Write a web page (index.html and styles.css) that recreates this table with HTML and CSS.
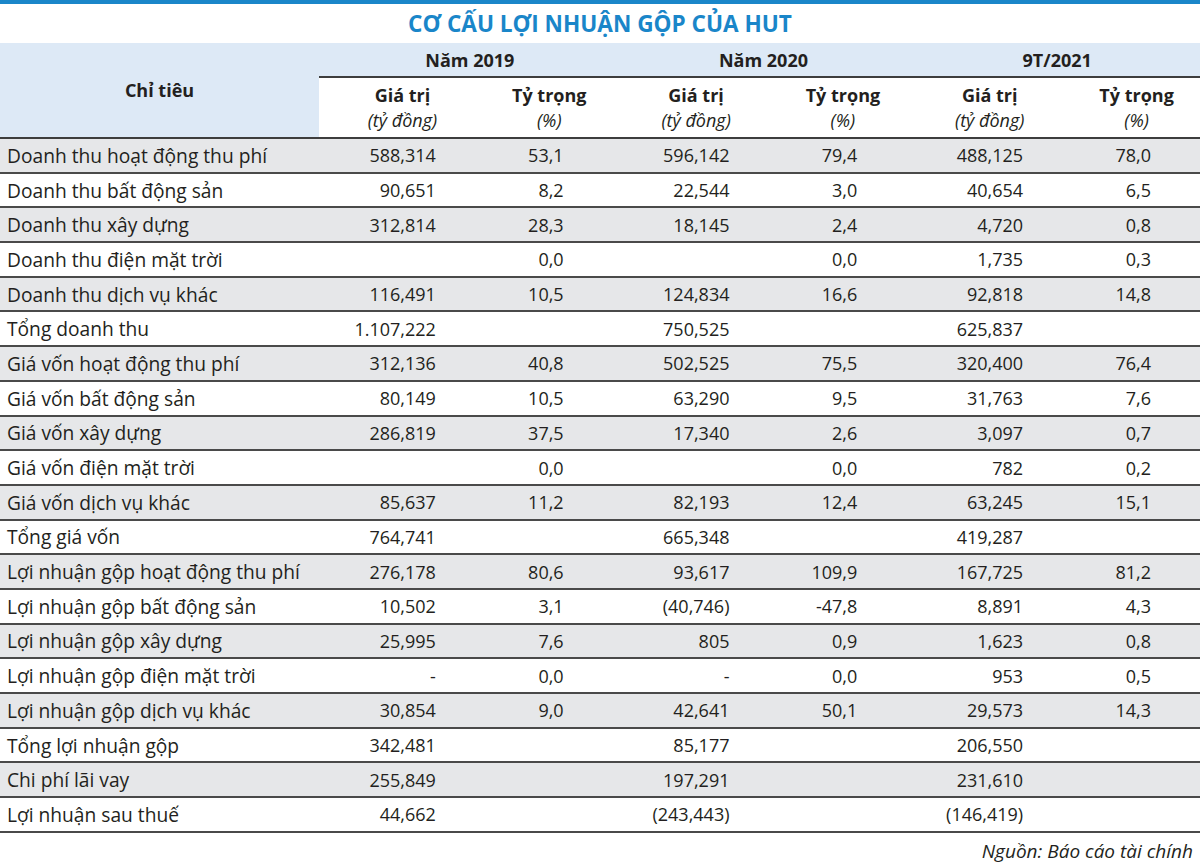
FILE: index.html
```html
<!DOCTYPE html>
<html lang="vi">
<head>
<meta charset="utf-8">
<title>Cơ cấu lợi nhuận gộp của HUT</title>
<link rel="stylesheet" href="styles.css">
</head>
<body>
<div class="topbar"></div>
<h1 class="title">CƠ CẤU LỢI NHUẬN GỘP CỦA HUT</h1>
<table class="tbl">
  <colgroup>
    <col class="c-label">
    <col class="c-num"><col class="c-num"><col class="c-num"><col class="c-num"><col class="c-num"><col class="c-num">
  </colgroup>
  <thead>
    <tr class="h-group">
      <th class="h-label" rowspan="2">Chỉ tiêu</th>
      <th colspan="2">Năm 2019</th>
      <th colspan="2">Năm 2020</th>
      <th colspan="2">9T/2021</th>
    </tr>
    <tr class="h-sub">
      <th><span class="b">Giá trị</span><span class="i">(tỷ đồng)</span></th>
      <th><span class="b">Tỷ trọng</span><span class="i">(%)</span></th>
      <th><span class="b">Giá trị</span><span class="i">(tỷ đồng)</span></th>
      <th><span class="b">Tỷ trọng</span><span class="i">(%)</span></th>
      <th><span class="b">Giá trị</span><span class="i">(tỷ đồng)</span></th>
      <th><span class="b">Tỷ trọng</span><span class="i">(%)</span></th>
    </tr>
  </thead>
  <tbody>
    <tr><td>Doanh thu hoạt động thu phí</td><td class="v">588,314</td><td class="p">53,1</td><td class="v">596,142</td><td class="p">79,4</td><td class="v">488,125</td><td class="p">78,0</td></tr>
    <tr><td>Doanh thu bất động sản</td><td class="v">90,651</td><td class="p">8,2</td><td class="v">22,544</td><td class="p">3,0</td><td class="v">40,654</td><td class="p">6,5</td></tr>
    <tr><td>Doanh thu xây dựng</td><td class="v">312,814</td><td class="p">28,3</td><td class="v">18,145</td><td class="p">2,4</td><td class="v">4,720</td><td class="p">0,8</td></tr>
    <tr><td>Doanh thu điện mặt trời</td><td class="v"></td><td class="p">0,0</td><td class="v"></td><td class="p">0,0</td><td class="v">1,735</td><td class="p">0,3</td></tr>
    <tr><td>Doanh thu dịch vụ khác</td><td class="v">116,491</td><td class="p">10,5</td><td class="v">124,834</td><td class="p">16,6</td><td class="v">92,818</td><td class="p">14,8</td></tr>
    <tr><td>Tổng doanh thu</td><td class="v">1.107,222</td><td class="p"></td><td class="v">750,525</td><td class="p"></td><td class="v">625,837</td><td class="p"></td></tr>
    <tr><td>Giá vốn hoạt động thu phí</td><td class="v">312,136</td><td class="p">40,8</td><td class="v">502,525</td><td class="p">75,5</td><td class="v">320,400</td><td class="p">76,4</td></tr>
    <tr><td>Giá vốn bất động sản</td><td class="v">80,149</td><td class="p">10,5</td><td class="v">63,290</td><td class="p">9,5</td><td class="v">31,763</td><td class="p">7,6</td></tr>
    <tr><td>Giá vốn xây dựng</td><td class="v">286,819</td><td class="p">37,5</td><td class="v">17,340</td><td class="p">2,6</td><td class="v">3,097</td><td class="p">0,7</td></tr>
    <tr><td>Giá vốn điện mặt trời</td><td class="v"></td><td class="p">0,0</td><td class="v"></td><td class="p">0,0</td><td class="v">782</td><td class="p">0,2</td></tr>
    <tr><td>Giá vốn dịch vụ khác</td><td class="v">85,637</td><td class="p">11,2</td><td class="v">82,193</td><td class="p">12,4</td><td class="v">63,245</td><td class="p">15,1</td></tr>
    <tr><td>Tổng giá vốn</td><td class="v">764,741</td><td class="p"></td><td class="v">665,348</td><td class="p"></td><td class="v">419,287</td><td class="p"></td></tr>
    <tr><td>Lợi nhuận gộp hoạt động thu phí</td><td class="v">276,178</td><td class="p">80,6</td><td class="v">93,617</td><td class="p">109,9</td><td class="v">167,725</td><td class="p">81,2</td></tr>
    <tr><td>Lợi nhuận gộp bất động sản</td><td class="v">10,502</td><td class="p">3,1</td><td class="v">(40,746)</td><td class="p">-47,8</td><td class="v">8,891</td><td class="p">4,3</td></tr>
    <tr><td>Lợi nhuận gộp xây dựng</td><td class="v">25,995</td><td class="p">7,6</td><td class="v">805</td><td class="p">0,9</td><td class="v">1,623</td><td class="p">0,8</td></tr>
    <tr><td>Lợi nhuận gộp điện mặt trời</td><td class="v">-</td><td class="p">0,0</td><td class="v">-</td><td class="p">0,0</td><td class="v">953</td><td class="p">0,5</td></tr>
    <tr><td>Lợi nhuận gộp dịch vụ khác</td><td class="v">30,854</td><td class="p">9,0</td><td class="v">42,641</td><td class="p">50,1</td><td class="v">29,573</td><td class="p">14,3</td></tr>
    <tr><td>Tổng lợi nhuận gộp</td><td class="v">342,481</td><td class="p"></td><td class="v">85,177</td><td class="p"></td><td class="v">206,550</td><td class="p"></td></tr>
    <tr><td>Chi phí lãi vay</td><td class="v">255,849</td><td class="p"></td><td class="v">197,291</td><td class="p"></td><td class="v">231,610</td><td class="p"></td></tr>
    <tr><td>Lợi nhuận sau thuế</td><td class="v">44,662</td><td class="p"></td><td class="v">(243,443)</td><td class="p"></td><td class="v">(146,419)</td><td class="p"></td></tr>
  </tbody>
</table>
<p class="source">Nguồn: Báo cáo tài chính</p>
</body>
</html>
```

FILE: styles.css
```css
html, body {
  margin: 0;
  padding: 0;
  background: #ffffff;
}

body {
  width: 1200px;
  font-family: "Open Sans", "Noto Sans", "Liberation Sans", sans-serif;
  color: #231f20;
}

.topbar {
  height: 4px;
  background: #1a86c9;
}

.title {
  margin: 0;
  height: 39px;
  line-height: 39px;
  text-align: center;
  font-size: 22.6px;
  font-weight: 700;
  color: #1a86c9;
}

.tbl {
  width: 1200px;
  border-collapse: collapse;
  table-layout: fixed;
  font-size: 18px;
}

.c-label { width: 319px; }
.c-num { width: 146.83px; }

.tbl th {
  font-weight: 700;
  padding: 0;
}

.h-group th {
  background: #dde9f6;
  height: 33px;
  text-align: center;
  border-bottom: 2px solid #3d3d3d;
  font-size: 18px;
  padding-left: 8px;
}

.h-group th.h-label {
  padding-left: 0;
  vertical-align: middle;
}

.h-sub th {
  height: 59px;
  background: #ffffff;
  text-align: center;
  padding-left: 20px;
  border-bottom: 2px solid #3d3d3d;
  vertical-align: middle;
}

.h-sub .b {
  display: block;
  line-height: 25px;
  font-weight: 700;
}

.h-sub .i {
  display: block;
  line-height: 25px;
  font-style: italic;
  font-weight: 400;
}

.tbl tbody tr {
  height: 34.7px;
}

.tbl tbody tr:nth-child(odd) {
  background: #e6e7e9;
}

.tbl td {
  padding: 0;
  border-bottom: 2px solid #4a4a4a;
  white-space: nowrap;
  vertical-align: middle;
}

.tbl td:first-child {
  padding-left: 7px;
  font-size: 19.2px;
}

.tbl td.v {
  text-align: right;
  padding-right: 30px;
}

.tbl td.p {
  text-align: right;
  padding-right: 49px;
}

.source {
  margin: 0;
  padding: 6px 7px 0 0;
  text-align: right;
  font-style: italic;
  font-size: 19px;
  line-height: 24px;
}
```
